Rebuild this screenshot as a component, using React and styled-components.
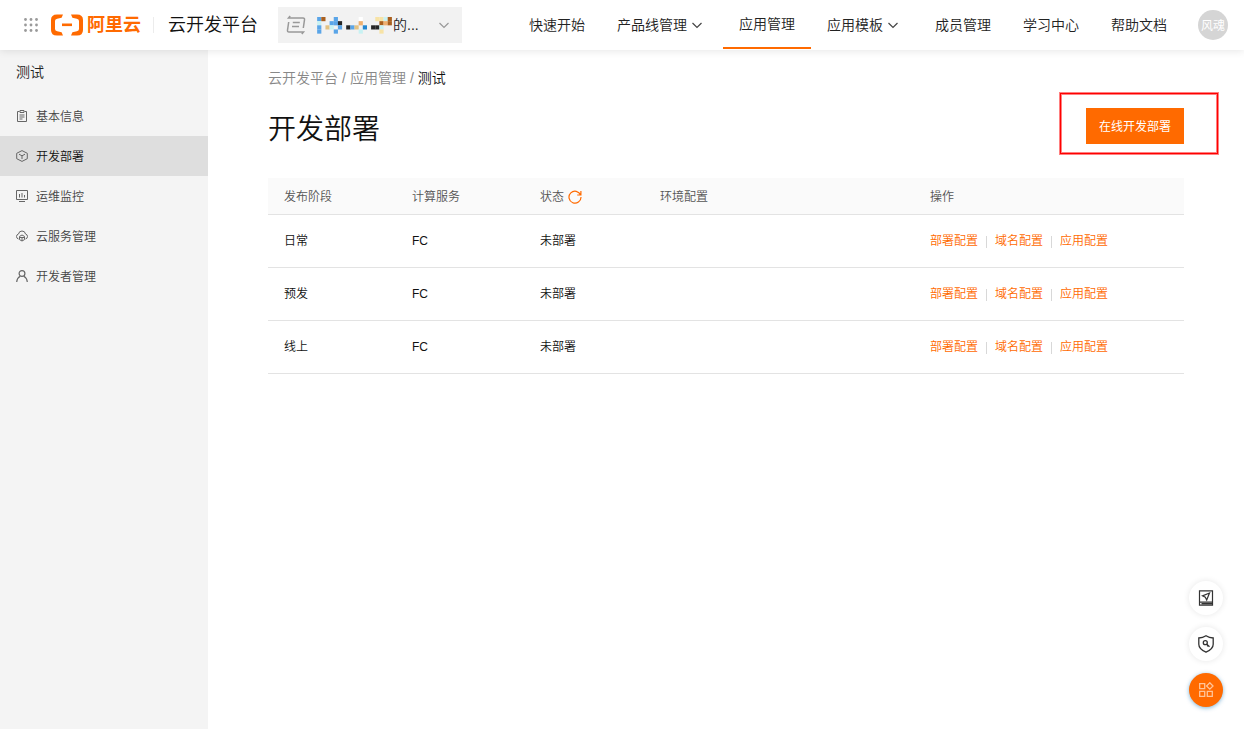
import styled, { createGlobalStyle } from 'styled-components';

const GlobalStyle = createGlobalStyle`
  * {
    box-sizing: border-box;
  }
  body {
    margin: 0;
    background: #fff;
    color: #111;
    font-family: "Liberation Sans", "Noto Sans CJK SC", sans-serif;
    font-size: 12px;
    font-weight: 350;
    line-height: 20px;
  }
  button, select {
    font-family: inherit;
    font-weight: inherit;
  }
`;

const Page = styled.div`
  display: flex;
  flex-direction: column;
  min-height: 100vh;
`;

const Header = styled.header`
  position: relative;
  z-index: 2;
  display: flex;
  align-items: center;
  height: 50px;
  padding: 0 16px 0 23px;
  background: #fff;
  box-shadow: 0 1px 8px rgba(0, 0, 0, 0.1);
`;

const AppsButton = styled.button`
  display: flex;
  padding: 0;
  border: none;
  background: none;
  color: #9a9a9a;
  cursor: pointer;
`;

const Logo = styled.a`
  display: flex;
  align-items: center;
  gap: 4px;
  margin-left: 12px;
  color: #ff6a00;
  font-size: 18px;
  font-weight: 700;
  text-decoration: none;
`;

const Divider = styled.div`
  width: 1px;
  height: 16px;
  margin: 0 14px 0 12px;
  background: #ececec;
`;

const Platform = styled.div`
  font-size: 18px;
  white-space: nowrap;
`;

const Project = styled.label`
  display: flex;
  align-items: center;
  width: 184px;
  height: 36px;
  margin-left: 20px;
  padding: 0 12px 0 8px;
  background: #f2f2f2;
  color: #999;
`;

const ProjectSelect = styled.select`
  flex: 1;
  min-width: 0;
  padding: 0;
  border: none;
  appearance: none;
  background: none;
  color: #222;
  font-size: 14px;
`;

const Mosaic = styled.svg`
  flex: none;
  margin-left: 8px;
`;

const Nav = styled.nav`
  display: flex;
  align-self: flex-start;
  margin-left: auto;
`;

const NavItem = styled.a`
  display: flex;
  align-items: center;
  gap: 4px;
  height: 49px;
  padding: 0 16px;
  border-bottom: ${(props) => (props.$active ? '2px solid #ff6a00' : 'none')};
  color: #222;
  font-size: 14px;
  text-decoration: none;
  white-space: nowrap;
`;

const NavArrow = styled.span`
  display: flex;
  width: 16px;
  color: #444;
`;

const Avatar = styled.button`
  flex: none;
  width: 30px;
  height: 30px;
  margin-left: 15px;
  padding: 0 0 2px;
  border: none;
  border-radius: 50%;
  background: #d5d5d5;
  color: #fff;
  font-size: 12px;
  font-weight: 400;
`;

const Body = styled.div`
  display: flex;
  flex: 1;
`;

const Sidebar = styled.aside`
  flex: none;
  width: 208px;
  background: #f4f4f4;
`;

const SideTitle = styled.div`
  margin-bottom: 2px;
  padding: 0 16px;
  color: #222;
  font-size: 14px;
  line-height: 44px;
`;

const SideItem = styled.a`
  display: flex;
  align-items: center;
  gap: 8px;
  height: 40px;
  padding: 0 16px;
  background: ${(props) => (props.$active ? '#dedede' : 'transparent')};
  color: ${(props) => (props.$active ? '#111' : '#444')};
  text-decoration: none;
  svg {
    color: #666;
  }
`;

const SideLabel = styled.span`
  padding-top: 2px;
`;

const Main = styled.main`
  flex: 1;
  min-width: 0;
  padding: 18px 60px;
`;

const Breadcrumb = styled.div`
  display: flex;
  gap: 4px;
  color: #888;
  font-size: 14px;
  a {
    color: inherit;
    text-decoration: none;
  }
  b {
    color: #111;
    font-weight: inherit;
  }
`;

const TitleRow = styled.div`
  display: flex;
  align-items: flex-start;
  justify-content: space-between;
  margin: 20px 0 26px;
`;

const Title = styled.h1`
  margin: 0;
  font-size: 28px;
  font-weight: inherit;
  line-height: 44px;
`;

const Highlight = styled.div`
  position: relative;
  &::after {
    content: "";
    position: absolute;
    inset: -15px -34px -10px -26px;
    border: 1px solid #f00;
    box-shadow: 0 0 0 1px #ff8080, inset 0 0 0 1px #ff8080;
    pointer-events: none;
  }
`;

const DeployButton = styled.button`
  display: block;
  height: 36px;
  padding: 0 12px 2px;
  border: 1px solid #ff6a00;
  background: #ff6a00;
  color: #fff;
  font-size: 12px;
  font-weight: 400;
  cursor: pointer;
`;

const Table = styled.table`
  width: 100%;
  border-collapse: separate;
  border-spacing: 0;
  table-layout: fixed;
`;

const Col = styled.col`
  width: ${(props) => props.$width}px;
`;

const Th = styled.th`
  height: 37px;
  padding: 1px 16px 0;
  border-bottom: 1px solid #e3e3e3;
  background: #fafafa;
  color: #555;
  font-weight: inherit;
  text-align: left;
`;

const ThContent = styled.div`
  display: flex;
  align-items: center;
  gap: 4px;
`;

const RefreshButton = styled.button`
  display: flex;
  padding: 0;
  border: none;
  background: none;
  color: #ff6a00;
  cursor: pointer;
`;

const Td = styled.td`
  height: 53px;
  padding: 0 16px;
  border-bottom: 1px solid #e3e3e3;
`;

const Actions = styled.div`
  display: flex;
  align-items: center;
`;

const Action = styled.a`
  color: #ff6a00;
  text-decoration: none;
  & + & {
    display: flex;
    align-items: center;
  }
  & + &::before {
    content: "";
    width: 1px;
    height: 12px;
    margin: 2px 8px 0;
    background: #d8d8d8;
  }
`;

const FloatBar = styled.div`
  position: fixed;
  right: 21px;
  bottom: 22px;
  display: flex;
  flex-direction: column;
  gap: 12px;
`;

const FloatButton = styled.button`
  display: flex;
  align-items: center;
  justify-content: center;
  width: 34px;
  height: 34px;
  padding: 0;
  border: none;
  border-radius: 50%;
  background: ${(props) => (props.$primary ? '#ff6a00' : '#fff')};
  color: ${(props) => (props.$primary ? '#ffc499' : '#333')};
  box-shadow: ${(props) =>
    props.$primary ? '0 1px 4px rgba(0, 110, 180, 0.5)' : '0 0 6px rgba(0, 0, 0, 0.1)'};
  cursor: pointer;
`;

const Icon = ({ size = 12, box = 12, stroke = 1, children }) => (
  <svg
    width={size}
    height={size}
    viewBox={`0 0 ${box} ${box}`}
    fill="none"
    stroke="currentColor"
    strokeWidth={stroke}
    aria-hidden="true"
  >
    {children}
  </svg>
);

const Chevron = () => (
  <Icon>
    <path d="M1.500 4 6 8.500 10.500 4" strokeWidth="1.2" />
  </Icon>
);

const AppsIcon = () => (
  <svg width="16" height="16" viewBox="0 0 16 16" fill="currentColor" aria-hidden="true">
    {[2.5, 8, 13.5].map((y) =>
      [2.5, 8, 13.5].map((x) => <circle key={`${x}-${y}`} cx={x} cy={y} r="1.4" />)
    )}
  </svg>
);

const LogoMark = () => (
  <svg width="32" height="22" viewBox="0 0 32 22" fill="currentColor" aria-hidden="true">
    <path d="M12 .5H6Q0 .5 0 6v10q0 5.500 6 5.500h6l-1.400-3.200-4.400-1Q4 17 4 15V7q0-2 2.200-2.300l4.400-1z" />
    <path d="M20 .5h6q6 0 6 5.500v10q0 5.500-6 5.500h-6l1.400-3.200 4.400-1Q28 17 28 15V7q0-2-2.200-2.300l-4.400-1z" />
    <path d="M11 9.500h10v2.600H11z" />
  </svg>
);

const ProjectIcon = () => (
  <Icon size={20} box={20} stroke={1.5}>
    <path d="M4.200 1 2.500 3H17q1.800 0 1.500 1.800L17.300 13M6.800 7.500h7M6 11.500h7M15.800 19l1.700-2H3q-1.800 0-1.500-1.800L2.700 7" />
  </Icon>
);

// one string per row, one letter per 4px cell, "." leaves a cell empty
const mosaicRows = [
  '.bn..b.....w...yycn',
  '.c..bbk....o....non',
  '.b.tc.b.kbt.d.kkc..',
  '.b...b.....c....y..',
];

const mosaicColors = {
  b: '#5aa5e8',
  n: '#a9601f',
  w: '#ffffff',
  y: '#f7e3a6',
  c: '#c8f2f3',
  k: '#262626',
  o: '#efb070',
  t: '#e3c283',
  d: '#2386d0',
};

const ProjectMosaic = () => (
  <Mosaic width="79" height="18" viewBox="0 0 79 18" aria-hidden="true">
    {mosaicRows.map((row, y) =>
      row.split('').map(
        (cell, x) =>
          cell !== '.' && (
            <rect
              key={`${x}-${y}`}
              x={x * 4.15 - 1}
              y={y * 4.15 + 1}
              width="4.2"
              height="4.2"
              fill={mosaicColors[cell]}
            />
          )
      )
    )}
  </Mosaic>
);

const ClipboardIcon = () => (
  <Icon>
    <path d="M3.500 1.500h-2v10h9v-10h-2M4 .5h4v2H4zM3.500 5h5M3.500 7h5M3.500 9h3" />
  </Icon>
);

const CubeIcon = () => (
  <Icon>
    <path d="M6 .6 11.300 3.300v5.400L6 11.400.7 8.700V3.300zM3 4.200l3 1.600 3-1.600M6 5.800V9" />
  </Icon>
);

const MonitorIcon = () => (
  <Icon>
    <path d="M.5.5h11v9H.5zM3 11.500h6M3.500 4v3.500M6 3v4.500M8.500 5v2.500" />
  </Icon>
);

const CloudIcon = () => (
  <Icon>
    <path d="M2.500 9Q.5 8.500.5 6.500T2.500 4Q3 1 6 1t3.500 3q2 .5 2 2.500T9.500 9" />
    <path d="M6 5 8.500 6.400v3.200L6 11 3.500 9.600V6.400zM3.500 7.500h5M6 7.500V11" />
  </Icon>
);

const UserIcon = () => (
  <Icon>
    <circle cx="6" cy="3.500" r="2.900" strokeWidth="1.2" />
    <path d="M.7 12q.3-4 3.500-5.700M11.300 12q-.3-4-3.500-5.700" strokeWidth="1.2" />
  </Icon>
);

const RefreshIcon = () => (
  <Icon size={14} box={14} stroke={1.2}>
    <path d="M12.600 5A6 6 0 1 0 13 7M12.900 1v4H9.200" />
  </Icon>
);

const GuideIcon = () => (
  <Icon size={16} box={16} stroke={1.2}>
    <path d="M1.500.8h13v14.400h-13zM1.500 12.200h13M3.500 13.700h11" />
    <path d="m11.500 3-2.800 7-1.400-2.800L4.500 5.900z" />
  </Icon>
);

const ShieldIcon = () => (
  <Icon size={18} box={18} stroke={1.3}>
    <path d="M9 .8q3.200 2.100 7.200 2.200v6.200q0 4.800-7.200 8-7.200-3.200-7.200-8V3Q5.800 2.900 9 .8z" />
    <circle cx="8.300" cy="7.700" r="2" />
    <path d="m9.800 9.200 2.700 2.500m-1.500-1.300-.8 1" />
  </Icon>
);

const WidgetsIcon = () => (
  <Icon size={16} box={16} stroke={1.3}>
    <path d="M1.700 1.700h5v5h-5zM1.700 9.300h5v5h-5zM9.300 9.300h5v5h-5zM11.800.8l3.200 3.200-3.200 3.200L8.600 4z" />
  </Icon>
);

const navItems = [
  { label: '快速开始' },
  { label: '产品线管理', arrow: true },
  { label: '应用管理', active: true },
  { label: '应用模板', arrow: true },
  { label: '成员管理' },
  { label: '学习中心' },
  { label: '帮助文档' },
];

const sideItems = [
  { label: '基本信息', icon: ClipboardIcon },
  { label: '开发部署', icon: CubeIcon, active: true },
  { label: '运维监控', icon: MonitorIcon },
  { label: '云服务管理', icon: CloudIcon },
  { label: '开发者管理', icon: UserIcon },
];

const columns = [128, 128, 120, 270, 270];
const stages = ['日常', '预发', '线上'];
const actions = ['部署配置', '域名配置', '应用配置'];

const App = () => {
  return (
    <Page>
      <GlobalStyle />
      <Header>
        <AppsButton aria-label="产品">
          <AppsIcon />
        </AppsButton>
        <Logo href="#">
          <LogoMark />
          阿里云
        </Logo>
        <Divider />
        <Platform>云开发平台</Platform>
        <Project>
          <ProjectIcon />
          <ProjectMosaic />
          <ProjectSelect aria-label="项目">
            <option>的...</option>
          </ProjectSelect>
          <Chevron />
        </Project>
        <Nav>
          {navItems.map((item) => (
            <NavItem key={item.label} href="#" $active={item.active}>
              {item.label}
              {item.arrow && (
                <NavArrow>
                  <Chevron />
                </NavArrow>
              )}
            </NavItem>
          ))}
        </Nav>
        <Avatar>风魂</Avatar>
      </Header>
      <Body>
        <Sidebar>
          <SideTitle>测试</SideTitle>
          {sideItems.map(({ label, icon: ItemIcon, active }) => (
            <SideItem key={label} href="#" $active={active}>
              <ItemIcon />
              <SideLabel>{label}</SideLabel>
            </SideItem>
          ))}
        </Sidebar>
        <Main>
          <Breadcrumb>
            <a href="#">云开发平台</a>
            <span>/</span>
            <a href="#">应用管理</a>
            <span>/</span>
            <b>测试</b>
          </Breadcrumb>
          <TitleRow>
            <Title>开发部署</Title>
            <Highlight>
              <DeployButton>在线开发部署</DeployButton>
            </Highlight>
          </TitleRow>
          <Table>
            <colgroup>
              {columns.map((width, i) => (
                <Col key={i} $width={width} />
              ))}
            </colgroup>
            <thead>
              <tr>
                <Th>发布阶段</Th>
                <Th>计算服务</Th>
                <Th>
                  <ThContent>
                    状态
                    <RefreshButton aria-label="刷新">
                      <RefreshIcon />
                    </RefreshButton>
                  </ThContent>
                </Th>
                <Th>环境配置</Th>
                <Th>操作</Th>
              </tr>
            </thead>
            <tbody>
              {stages.map((stage) => (
                <tr key={stage}>
                  <Td>{stage}</Td>
                  <Td>FC</Td>
                  <Td>未部署</Td>
                  <Td />
                  <Td>
                    <Actions>
                      {actions.map((action) => (
                        <Action key={action} href="#">
                          {action}
                        </Action>
                      ))}
                    </Actions>
                  </Td>
                </tr>
              ))}
            </tbody>
          </Table>
        </Main>
      </Body>
      <FloatBar>
        <FloatButton aria-label="指南">
          <GuideIcon />
        </FloatButton>
        <FloatButton aria-label="安全">
          <ShieldIcon />
        </FloatButton>
        <FloatButton aria-label="应用" $primary>
          <WidgetsIcon />
        </FloatButton>
      </FloatBar>
    </Page>
  );
};

export default App;
